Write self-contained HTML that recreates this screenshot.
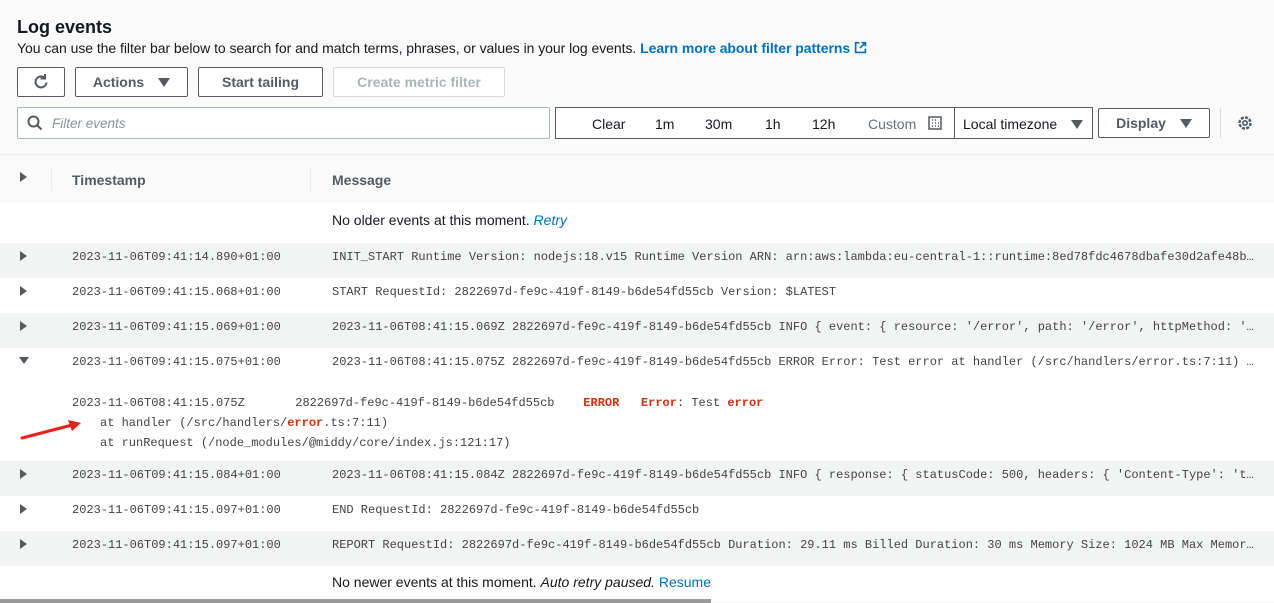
<!DOCTYPE html>
<html><head><meta charset="utf-8"><style>
*{box-sizing:border-box;margin:0;padding:0}
body{width:1274px;height:603px;overflow:hidden;background:#fafafa;font-family:"Liberation Sans",sans-serif;color:#16191f;position:relative}
.a{position:absolute;white-space:nowrap}
.btn{position:absolute;border:1px solid #545b64;background:#fff;height:30px;font-size:14px;font-weight:bold;color:#545b64;display:flex;align-items:center;justify-content:center;border-radius:2px}
.row{position:absolute;left:0;width:1274px;height:35px}
.g{background:#f2f3f3}
.mono{font-family:"Liberation Mono",monospace;font-size:12px;color:#444}
.tri{position:absolute;left:20px;width:0;height:0;border-top:5px solid transparent;border-bottom:5px solid transparent;border-left:7px solid #545b64}
.red{color:#d13212;font-weight:bold}
.dd{display:inline-block;width:0;height:0;border-left:6px solid transparent;border-right:6px solid transparent;border-top:9px solid #545b64;margin-left:14px}
</style></head><body>
<div class="a" style="left:17px;top:17px;font-size:18px;font-weight:bold">Log events</div>
<div class="a" style="left:17px;top:40px;font-size:14px;letter-spacing:-0.05px">You can use the filter bar below to search for and match terms, phrases, or values in your log events. <b style="color:#0073bb">Learn more about filter patterns</b> <svg width="13" height="13" viewBox="0 0 12 12" style="vertical-align:-1px"><path d="M5 1.5H1.5v9h9V7M7 1.5h3.5V5M10.5 1.5L5.5 6.5" fill="none" stroke="#0073bb" stroke-width="1.5"/></svg></div>
<div class="btn" style="left:17px;top:67px;width:48px"><svg width="18" height="18" viewBox="0 0 18 18"><path d="M14.5 9.5a5.5 5.5 0 1 1-2.5-5.2" fill="none" stroke="#545b64" stroke-width="2"/><path d="M13 1v4.5H8.5" fill="none" stroke="#545b64" stroke-width="2"/></svg></div>
<div class="btn" style="left:75px;top:67px;width:113px">Actions<span class="dd"></span></div>
<div class="btn" style="left:198px;top:67px;width:125px">Start tailing</div>
<div class="btn" style="left:333px;top:67px;width:172px;border-color:#d5dbdb;color:#aab7b8">Create metric filter</div>
<div class="a" style="left:17px;top:107px;width:533px;height:32px;border:1px solid #aab7b8;background:#fff;border-radius:2px">
<svg class="a" style="left:9px;top:7px" width="16" height="16" viewBox="0 0 16 16"><circle cx="6.5" cy="6.5" r="5" fill="none" stroke="#545b64" stroke-width="2"/><path d="M10 10l4.5 4.5" stroke="#545b64" stroke-width="2"/></svg>
<span class="a" style="left:34px;top:8px;font-size:13.5px;font-style:italic;color:#879596">Filter events</span></div>
<div class="a" style="left:555px;top:107px;width:400px;height:32px;border:1px solid #545b64;background:#fff;font-size:14px">
<span class="a" style="left:36px;top:8px">Clear</span><span class="a" style="left:99px;top:8px">1m</span><span class="a" style="left:149px;top:8px">30m</span><span class="a" style="left:209px;top:8px">1h</span><span class="a" style="left:256px;top:8px">12h</span><span class="a" style="left:312px;top:8px;color:#687078">Custom</span>
<svg class="a" style="left:372px;top:8px" width="14" height="14" viewBox="0 0 14 14"><rect x="1" y="1" width="12" height="12" fill="none" stroke="#545b64" stroke-width="1.5"/><path d="M4 4h1M7 4h1M10 4h0M4 7h1M7 7h1M10 7h1M4 10h1M7 10h1M10 10h1" stroke="#545b64" stroke-width="1.5"/></svg></div>
<div class="a" style="left:954px;top:107px;width:139px;height:32px;border:1px solid #545b64;background:#fff;font-size:14px"><span class="a" style="left:8px;top:8px">Local timezone</span><span class="a" style="left:116px;top:12px;border-left:6px solid transparent;border-right:6px solid transparent;border-top:9px solid #545b64"></span></div>
<div class="btn" style="left:1098px;top:108px;width:112px">Display<span class="dd"></span></div>
<div class="a" style="left:1220px;top:108px;width:1px;height:30px;background:#d5dbdb"></div>
<svg class="a" style="left:1236px;top:114px" width="18" height="18" viewBox="0 0 18 18"><circle cx="9" cy="9" r="5.5" fill="none" stroke="#545b64" stroke-width="2.5" stroke-dasharray="3 1.3"/><circle cx="9" cy="9" r="2.2" fill="none" stroke="#545b64" stroke-width="1.6"/></svg>
<div class="a" style="left:0;top:154px;width:1274px;height:1px;background:#eaeded"></div>
<div class="tri" style="top:172px"></div>
<div class="a" style="left:51px;top:167px;width:1px;height:24px;background:#eaeded"></div>
<div class="a" style="left:310px;top:167px;width:1px;height:24px;background:#eaeded"></div>
<div class="a" style="left:72px;top:172px;font-size:14px;font-weight:bold;color:#545b64">Timestamp</div>
<div class="a" style="left:332px;top:172px;font-size:14px;font-weight:bold;color:#545b64">Message</div>
<div class="a" style="left:0;top:203px;width:1274px;height:398px;background:#fff"></div>
<div class="a" style="left:332px;top:212px;font-size:14px">No older events at this moment. <i style="color:#0073bb">Retry</i></div>

<div class="row g" style="top:243px"><div class="tri" style="top:8px"></div><span class="a mono" style="left:72px;top:7px">2023-11-06T09:41:14.890+01:00</span><span class="a mono" style="left:332px;top:7px">INIT_START Runtime Version: nodejs:18.v15 Runtime Version ARN: arn:aws:lambda:eu-central-1::runtime:8ed78fdc4678dbafe30d2afe48b…</span></div>
<div class="row" style="top:278px"><div class="tri" style="top:8px"></div><span class="a mono" style="left:72px;top:7px">2023-11-06T09:41:15.068+01:00</span><span class="a mono" style="left:332px;top:7px">START RequestId: 2822697d-fe9c-419f-8149-b6de54fd55cb Version: $LATEST</span></div>
<div class="row g" style="top:313px"><div class="tri" style="top:8px"></div><span class="a mono" style="left:72px;top:7px">2023-11-06T09:41:15.069+01:00</span><span class="a mono" style="left:332px;top:7px">2023-11-06T08:41:15.069Z 2822697d-fe9c-419f-8149-b6de54fd55cb INFO { event: { resource: '/error', path: '/error', httpMethod: '…</span></div>
<div class="row" style="top:348px"><div class="a" style="left:19px;top:9px;border-left:5px solid transparent;border-right:5px solid transparent;border-top:7px solid #545b64"></div><span class="a mono" style="left:72px;top:7px">2023-11-06T09:41:15.075+01:00</span><span class="a mono" style="left:332px;top:7px">2023-11-06T08:41:15.075Z 2822697d-fe9c-419f-8149-b6de54fd55cb ERROR Error: Test error at handler (/src/handlers/error.ts:7:11) …</span></div>
<div class="a mono" style="left:72px;top:396px">2023-11-06T08:41:15.075Z&nbsp;&nbsp;&nbsp;&nbsp;&nbsp;&nbsp;&nbsp;2822697d-fe9c-419f-8149-b6de54fd55cb&nbsp;&nbsp;&nbsp;&nbsp;<span class="red">ERROR</span>&nbsp;&nbsp;&nbsp;<span class="red">Error</span>: Test <span class="red">error</span></div>
<div class="a mono" style="left:100px;top:416px">at handler (/src/handlers/<span class="red">error</span>.ts:7:11)</div>
<div class="a mono" style="left:100px;top:436px">at runRequest (/node_modules/@middy/core/index.js:121:17)</div>
<svg class="a" style="left:18px;top:418px" width="66" height="24" viewBox="0 0 66 24"><path d="M4 20L58 6" stroke="#e8201c" stroke-width="3" stroke-linecap="round"/><path d="M50 2L63 5L54 13Z" fill="#e8201c"/></svg>
<div class="row g" style="top:461px"><div class="tri" style="top:8px"></div><span class="a mono" style="left:72px;top:7px">2023-11-06T09:41:15.084+01:00</span><span class="a mono" style="left:332px;top:7px">2023-11-06T08:41:15.084Z 2822697d-fe9c-419f-8149-b6de54fd55cb INFO { response: { statusCode: 500, headers: { 'Content-Type': 't…</span></div>
<div class="row" style="top:496px"><div class="tri" style="top:8px"></div><span class="a mono" style="left:72px;top:7px">2023-11-06T09:41:15.097+01:00</span><span class="a mono" style="left:332px;top:7px">END RequestId: 2822697d-fe9c-419f-8149-b6de54fd55cb</span></div>
<div class="row g" style="top:531px"><div class="tri" style="top:8px"></div><span class="a mono" style="left:72px;top:7px">2023-11-06T09:41:15.097+01:00</span><span class="a mono" style="left:332px;top:7px">REPORT RequestId: 2822697d-fe9c-419f-8149-b6de54fd55cb Duration: 29.11 ms Billed Duration: 30 ms Memory Size: 1024 MB Max Memor…</span></div>
<div class="a" style="left:332px;top:574px;font-size:14px">No newer events at this moment. <i>Auto retry paused.</i> <span style="color:#0073bb">Resume</span></div>
<div class="a" style="left:0;top:599px;width:711px;height:4px;background:#999"></div>
</body></html>
